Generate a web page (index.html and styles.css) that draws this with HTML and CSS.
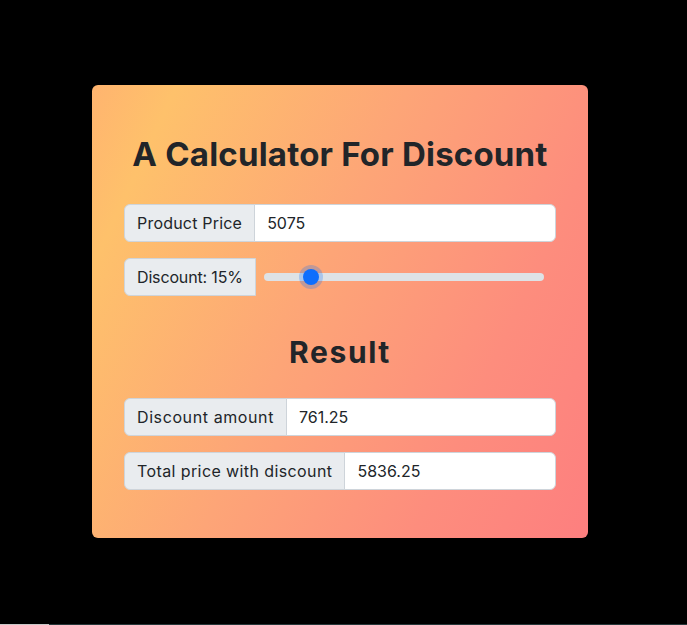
FILE: index.html
```html
<!DOCTYPE html>
<html lang="en">
<head>
<meta charset="utf-8">
<title>A Calculator For Discount</title>
<link rel="stylesheet" href="styles.css">
</head>
<body>
<main class="card">
  <h1 class="title">A Calculator For Discount</h1>
  <div class="input-group">
    <span class="addon addon-price">Product Price</span>
    <input class="field" type="text" value="5075">
  </div>
  <div class="input-group">
    <span class="addon addon-tight">Discount: 15%</span>
    <input class="range" type="range" min="0" max="100" value="15">
  </div>
  <h2 class="subtitle">Result</h2>
  <div class="input-group">
    <span class="addon addon-wide">Discount amount</span>
    <input class="field" type="text" value="761.25" readonly>
  </div>
  <div class="input-group">
    <span class="addon">Total price with discount</span>
    <input class="field" type="text" value="5836.25" readonly>
  </div>
</main>
<div class="bottom-strip"><span class="strip-light"></span><span class="strip-dark"></span></div>
</body>
</html>
```
FILE: styles.css
```css
html, body {
  margin: 0;
  padding: 0;
  background: #000;
  height: 100%;
}
body {
  font-family: Inter, "Noto Sans", sans-serif;
  color: #212529;
  overflow: hidden;
  position: relative;
}
.card {
  box-sizing: border-box;
  width: 496px;
  height: 453px;
  margin: 85px 0 0 92px;
  padding: 0 32px;
  border-radius: 6px;
  background: linear-gradient(115deg, #ffb46f 0%, #fec16b 12%, #fda577 45%, #fd8d7d 75%, #fd7f7f 100%);
  display: flex;
  flex-direction: column;
}
.title {
  margin: 49px 0 30px;
  font-size: 33px;
  line-height: 40px;
  font-weight: 700;
  text-align: center;
  letter-spacing: 0.2px;
}
.subtitle {
  margin: 21px 0 27px;
  font-size: 30px;
  line-height: 38px;
  font-weight: 700;
  text-align: center;
  letter-spacing: 1.6px;
}
.input-group {
  display: flex;
  align-items: center;
  margin-bottom: 16px;
  height: 38px;
}
.addon {
  box-sizing: border-box;
  height: 38px;
  padding: 6px 12px;
  font-size: 16px;
  line-height: 24px;
  letter-spacing: 0.4px;
  background: #e9ecef;
  border: 1px solid #ced4da;
  border-radius: 6px 0 0 6px;
  white-space: nowrap;
  color: #212529;
}
.addon-price {
  letter-spacing: 0.2px;
}
.addon-wide {
  letter-spacing: 0.6px;
}
.addon-tight {
  letter-spacing: -0.15px;
}
.field {
  box-sizing: border-box;
  flex: 1;
  min-width: 0;
  height: 38px;
  margin: 0 0 0 -1px;
  padding: 6px 12px;
  font-family: inherit;
  font-size: 16px;
  line-height: 24px;
  color: #212529;
  background: #fff;
  border: 1px solid #ced4da;
  border-radius: 0 6px 6px 0;
  outline: none;
}
.range {
  flex: 1;
  min-width: 0;
  height: 24px;
  margin: 0 12px 0 8px;
  padding: 0;
  background: transparent;
  -webkit-appearance: none;
  appearance: none;
}
.range::-webkit-slider-runnable-track {
  height: 8px;
  background: #dee2e6;
  border-radius: 16px;
}
.range::-webkit-slider-thumb {
  -webkit-appearance: none;
  width: 16px;
  height: 16px;
  margin-top: -4px;
  border: 0;
  border-radius: 50%;
  background: #0d6efd;
  box-shadow: 0 0 0 4px rgba(13, 110, 253, 0.25);
}
.bottom-strip {
  position: absolute;
  left: 0;
  right: 0;
  bottom: 0;
  height: 1px;
  display: flex;
}
.strip-light { width: 49px; background: #c8c8c8; }
.strip-dark { flex: 1; background: #26373a; }
```
